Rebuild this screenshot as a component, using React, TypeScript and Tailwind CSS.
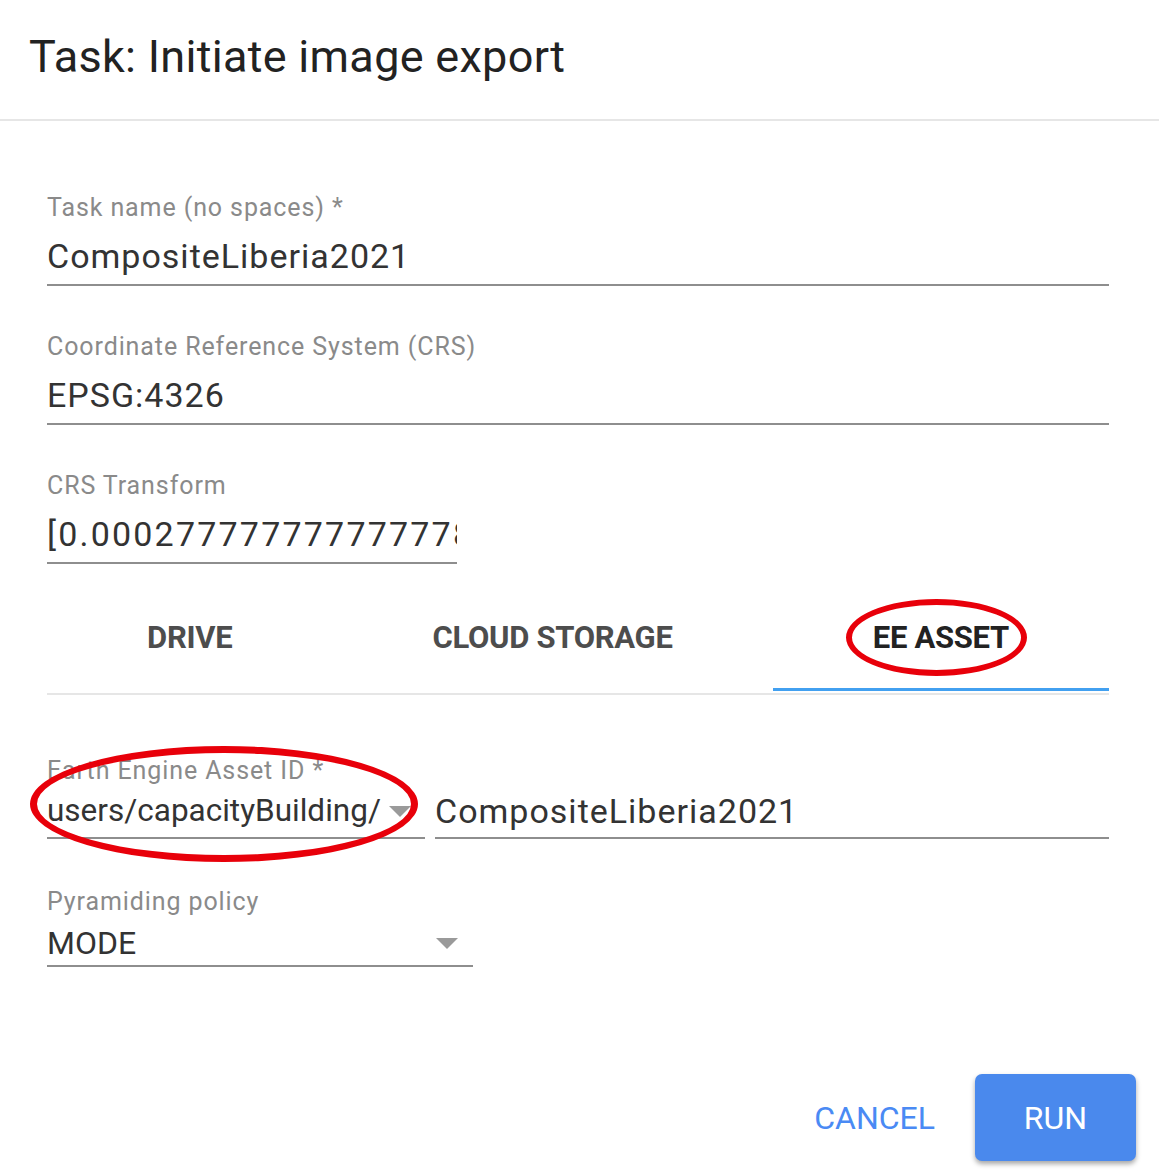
const font = { fontFamily: "Roboto, 'Noto Sans', sans-serif" };

const Arrow = () => (
  <svg width="22" height="11" viewBox="0 0 22 11" className="shrink-0">
    <path d="M0 0 L22 0 L11 11 Z" fill="#9a9a9a" />
  </svg>
);

type FieldProps = {
  label: string;
  value: string;
  width?: string;
  tracking?: string;
};

const TextField = ({ label, value, width = "w-full", tracking = "tracking-[1px]" }: FieldProps) => {
  return (
    <div className={width}>
      <div className="text-[25px] leading-[28px] tracking-[0.9px] text-[#8a8a8a]">{label}</div>
      <input
        readOnly
        value={value}
        className={`mt-[14px] block w-full border-b-2 border-[#8e8e8e] pb-[8px] text-[34px] leading-[40px] text-[#333] outline-none ${tracking}`}
      />
    </div>
  );
};

export default function App() {
  return (
    <div className="relative h-[1175px] w-[1159px] bg-white" style={font}>
      <div className="flex h-[121px] items-center border-b-2 border-[#e6e6e6] pb-[6px] pl-[29px]">
        <h1 className="text-[45px] leading-none tracking-[0.3px] text-[#222]">Task: Initiate image export</h1>
      </div>

      <div className="pl-[47px] pr-[50px] pt-[73px]">
        <TextField label="Task name (no spaces) *" value="CompositeLiberia2021" />
        <div className="mt-[47px]">
          <TextField label="Coordinate Reference System (CRS)" value="EPSG:4326" />
        </div>
        <div className="mt-[47px]">
          <TextField
            label="CRS Transform"
            value="[0.000277777777777778, 0, -11.5, 0, -0.000277777777777778, 8.6]"
            width="w-[410px]"
            tracking="tracking-[2.2px]"
          />
        </div>

        <div className="mt-[34px] flex border-b-2 border-[#e6e6e6]">
          <div className="mb-[2px] flex h-[93px] flex-auto justify-center px-[10px] pt-[22px] text-[31px] font-bold leading-[36px] tracking-[-0.3px] text-[#4d4d4d]">
            DRIVE
          </div>
          <div className="mb-[2px] flex h-[93px] flex-auto justify-center px-[10px] pt-[22px] text-[31px] font-bold leading-[36px] tracking-[-0.3px] text-[#4d4d4d]">
            CLOUD STORAGE
          </div>
          <div className="mb-[2px] flex h-[93px] flex-auto justify-center border-b-[3px] border-[#42a0f0] px-[10px] pt-[22px] text-[31px] font-bold leading-[36px] tracking-[-0.3px] text-[#222]">
            EE ASSET
          </div>
        </div>

        <div className="mt-[62px] flex items-end gap-[10px]">
          <div className="w-[378px]">
            <div className="text-[25px] leading-[28px] tracking-[0.9px] text-[#8a8a8a]">Earth Engine Asset ID *</div>
            <div className="mt-[6px] flex items-center justify-between border-b-2 border-[#8e8e8e] pb-[6px] pr-[14px]">
              <span className="whitespace-nowrap text-[31.5px] leading-[40px] text-[#333]">users/capacityBuilding/</span>
              <Arrow />
            </div>
          </div>
          <div className="flex-1 border-b-2 border-[#8e8e8e] pb-[6px] text-[34px] leading-[40px] tracking-[1px] text-[#333]">
            CompositeLiberia2021
          </div>
        </div>

        <div className="mt-[49px] w-[426px]">
          <div className="text-[25px] leading-[28px] tracking-[0.9px] text-[#8a8a8a]">Pyramiding policy</div>
          <div className="mt-[7px] flex items-center justify-between border-b-2 border-[#8e8e8e] pb-[2px] pr-[15px]">
            <span className="text-[32px] leading-[40px] text-[#333]">MODE</span>
            <Arrow />
          </div>
        </div>
      </div>

      <div className="mt-[107px] flex items-center justify-end gap-[40px] pr-[23px]">
        <button className="text-[32px] text-[#4a8af4]">CANCEL</button>
        <button className="flex h-[87px] w-[161px] items-center justify-center rounded-[7px] bg-[#4a89ed] text-[32px] text-white shadow-[0_3px_5px_rgba(0,0,0,0.35)]">
          RUN
        </button>
      </div>

      <div className="pointer-events-none absolute left-[846px] top-[599px] h-[77px] w-[181px] rounded-[50%] border-[6px] border-[#e8000a]" />
      <div className="pointer-events-none absolute left-[30px] top-[746px] h-[116px] w-[388px] rounded-[50%] border-[7px] border-[#e8000a]" />
    </div>
  );
}
